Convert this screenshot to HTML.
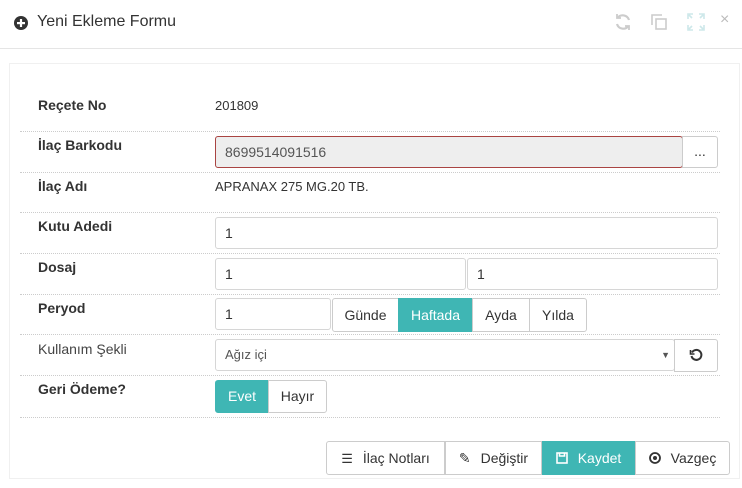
<!DOCTYPE html>
<html><head><meta charset="utf-8"><style>
*{box-sizing:border-box;margin:0;padding:0}
body{width:742px;height:488px;background:#fff;font-family:"Liberation Sans",sans-serif;position:relative;overflow:hidden;color:#333}
.a{position:absolute}
.hdr{left:0;top:0;width:742px;height:49px;border-bottom:1px solid #e5e5e5}
.title{left:37px;top:13px;font-size:16px;color:#333}
.box{left:9px;top:63px;width:731px;height:416px;border:1px solid #f0f0f0}
.lbl{left:38px;font-size:14px;font-weight:bold;color:#333}
.sep{left:20px;width:700px;border-top:1px dotted #ccc;height:0}
.inp{border:1px solid #d6d6d6;border-radius:3px;font-size:14px;padding-left:9px;line-height:30px;color:#333;height:32px}
.btn{border:1px solid #ccc;font-size:14px;text-align:center;color:#333;background:#fff}
.teal{background:#3fb6b4;border-color:#3fb6b4;color:#fff}
</style></head><body>
<div class="a hdr"></div>
<svg class="a" style="left:13px;top:15px" width="16" height="16" viewBox="0 0 16 16"><circle cx="8" cy="8" r="7" fill="#333"/><rect x="4" y="7" width="8" height="2.2" fill="#fff"/><rect x="6.9" y="4" width="2.2" height="8" fill="#fff"/></svg>
<div class="a title">Yeni Ekleme Formu</div>
<svg class="a" style="left:613px;top:12px" width="20" height="20" viewBox="0 0 20 20" fill="none" stroke="#ccc" stroke-width="2.2"><path d="M16 8a6.5 6.5 0 0 0-11.5-2M4 12a6.5 6.5 0 0 0 11.5 2"/><path d="M4 2v4h4M16 18v-4h-4" stroke-width="1.8"/></svg>
<svg class="a" style="left:650px;top:13px" width="18" height="18" viewBox="0 0 18 18" fill="none" stroke="#ccc" stroke-width="1.6"><path d="M2 12V2h10"/><rect x="6" y="6" width="10" height="10"/></svg>
<svg class="a" style="left:686px;top:12px" width="20" height="20" viewBox="0 0 20 20" fill="none" stroke="#cde8ea" stroke-width="1.6"><path d="M2 7V2h5M3 3l3 3M18 7V2h-5M17 3l-3 3M2 13v5h5M3 17l3-3M18 13v5h-5M17 17l-3-3"/></svg>
<div class="a" style="left:720px;top:11px;font-size:16px;color:#bbb">×</div>
<div class="a box"></div>

<div class="a lbl" style="top:97px">Reçete No</div>
<div class="a" style="left:215px;top:98px;font-size:13px">201809</div>
<div class="a sep" style="top:131px"></div>
<div class="a lbl" style="top:137px">İlaç Barkodu</div>
<div class="a inp" style="left:215px;top:136px;width:468px;background:#eee;border-color:#a94442;color:#555">8699514091516</div>
<div class="a btn" style="left:682px;top:136px;width:36px;height:32px;line-height:28px;border-radius:0 3px 3px 0">...</div>
<div class="a sep" style="top:172px"></div>
<div class="a lbl" style="top:178px">İlaç Adı</div>
<div class="a" style="left:215px;top:179px;font-size:13px">APRANAX 275 MG.20 TB.</div>
<div class="a sep" style="top:212px"></div>
<div class="a lbl" style="top:218px">Kutu Adedi</div>
<div class="a inp" style="left:215px;top:217px;width:503px">1</div>
<div class="a sep" style="top:253px"></div>
<div class="a lbl" style="top:259px">Dosaj</div>
<div class="a inp" style="left:215px;top:258px;width:251px">1</div>
<div class="a inp" style="left:467px;top:258px;width:251px">1</div>
<div class="a sep" style="top:294px"></div>
<div class="a lbl" style="top:300px">Peryod</div>
<div class="a inp" style="left:215px;top:298px;width:116px">1</div>
<div class="a btn" style="left:332px;top:298px;width:67px;height:34px;line-height:32px;border-radius:3px 0 0 3px">Günde</div>
<div class="a btn teal" style="left:398px;top:298px;width:75px;height:34px;line-height:32px">Haftada</div>
<div class="a btn" style="left:472px;top:298px;width:58px;height:34px;line-height:32px">Ayda</div>
<div class="a btn" style="left:529px;top:298px;width:58px;height:34px;line-height:32px;border-radius:0 3px 3px 0">Yılda</div>
<div class="a sep" style="top:334px"></div>
<div class="a" style="left:38px;top:341px;font-size:14px;color:#444">Kullanım Şekli</div>
<div class="a inp" style="left:215px;top:339px;width:460px;font-size:13px;color:#555">Ağız içi<span style="position:absolute;right:4px;top:0;font-size:9px">▼</span></div>
<div class="a btn" style="left:674px;top:339px;width:44px;height:33px;border-radius:0 3px 3px 0"></div>
<svg class="a" style="left:689px;top:348px" width="14" height="14" viewBox="0 0 14 14" fill="none" stroke="#333" stroke-width="2"><path d="M3 4.5A5 5 0 1 1 2.5 8"/><path d="M1.5 2v4h4" stroke-width="1.6"/></svg>
<div class="a sep" style="top:375px"></div>
<div class="a lbl" style="top:381px">Geri Ödeme?</div>
<div class="a btn teal" style="left:215px;top:380px;width:54px;height:33px;line-height:31px;border-radius:3px 0 0 3px">Evet</div>
<div class="a btn" style="left:268px;top:380px;width:59px;height:33px;line-height:31px;border-radius:0 3px 3px 0">Hayır</div>
<div class="a sep" style="top:417px"></div>

<div class="a btn" style="left:326px;top:441px;width:119px;height:34px;line-height:32px;border-radius:3px 0 0 3px"><span style="font-size:13px;margin-right:10px">☰</span>İlaç Notları</div>
<div class="a btn" style="left:445px;top:441px;width:97px;height:34px;line-height:32px"><span style="margin-right:10px">✎</span>Değiştir</div>
<div class="a btn teal" style="left:542px;top:441px;width:93px;height:34px;line-height:32px"><svg width="12" height="12" viewBox="0 0 12 12" style="margin-right:10px;vertical-align:-1px" fill="none" stroke="#fff" stroke-width="1.6"><rect x="1" y="1" width="10" height="10"/><path d="M3.5 1v3h5V1"/></svg>Kaydet</div>
<div class="a btn" style="left:635px;top:441px;width:95px;height:34px;line-height:32px;border-radius:0 3px 3px 0"><svg width="12" height="12" viewBox="0 0 12 12" style="margin-right:10px;vertical-align:-1px"><circle cx="6" cy="6" r="5" fill="none" stroke="#333" stroke-width="1.8"/><circle cx="6" cy="6" r="2" fill="#333"/></svg>Vazgeç</div>
</body></html>
